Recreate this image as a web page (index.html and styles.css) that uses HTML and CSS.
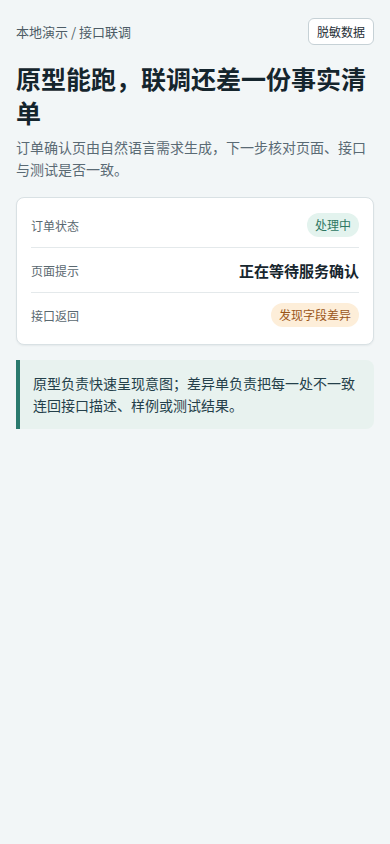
FILE: index.html
```html
<!DOCTYPE html>
<html lang="zh-CN">

<head>
    <meta charset="UTF-8">
    <meta name="viewport" content="width=device-width, initial-scale=1.0">
    <title>接口联调</title>
    <link rel="stylesheet" href="styles.css">
</head>

<body>
    <div class="page">
        <!-- Top bar -->
        <div class="top-bar">
            <div class="crumb">本地演示 / 接口联调</div>
            <button class="mask-button">脱敏数据</button>
        </div>

        <h1 class="title">原型能跑，联调还差一份事实清单</h1>
        <p class="lead">订单确认页由自然语言需求生成，下一步核对页面、接口与测试是否一致。</p>

        <!-- Fact list -->
        <div class="fact-card">
            <div class="fact-row">
                <span class="fact-label">订单状态</span>
                <span class="pill pill-green">处理中</span>
            </div>
            <div class="fact-row">
                <span class="fact-label">页面提示</span>
                <span class="fact-value">正在等待服务确认</span>
            </div>
            <div class="fact-row">
                <span class="fact-label">接口返回</span>
                <span class="pill pill-orange">发现字段差异</span>
            </div>
        </div>

        <div class="note">
            原型负责快速呈现意图；差异单负责把每一处不一致连回接口描述、样例或测试结果。
        </div>
    </div>
</body>

</html>
```

FILE: styles.css
```css
/* Base Styles */
body {
    font-family: "Noto Sans CJK SC", "Noto Sans", sans-serif;
    background-color: #f2f6f7;
    margin: 0;
    padding: 0;
    color: #17262e;
}

.page {
    padding: 18px 16px;
}

.top-bar {
    display: flex;
    justify-content: space-between;
    align-items: center;
}

.crumb {
    font-size: 13px;
    color: #4d5c66;
}

.mask-button {
    font-family: inherit;
    font-size: 12px;
    color: #1f2e36;
    background-color: #fff;
    border: 1px solid #c6d1d6;
    border-radius: 6px;
    padding: 4px 8px;
    line-height: 17px;
    height: 27px;
}

.title {
    font-size: 25px;
    font-weight: 700;
    line-height: 34px;
    margin: 16px 0 7px;
    color: #15252d;
}

.lead {
    font-size: 14px;
    line-height: 22px;
    color: #5a6a74;
    margin: 0 0 17px;
}

.fact-card {
    background-color: #fff;
    border: 1px solid #d9e1e4;
    border-radius: 8px;
    padding: 5px 14px 7px;
    box-shadow: 0 1px 2px rgba(20, 40, 50, 0.06);
}

.fact-row {
    display: flex;
    justify-content: space-between;
    align-items: center;
    height: 44px;
}

.fact-row + .fact-row {
    border-top: 1px solid #e4e9eb;
}

.fact-label {
    font-size: 12px;
    color: #5a6870;
}

.fact-value {
    font-size: 15px;
    font-weight: 700;
    color: #17262e;
}

.pill {
    font-size: 12px;
    line-height: 24px;
    padding: 0 8px;
    border-radius: 12px;
}

.pill-green {
    background-color: #e3f3ee;
    color: #2e7762;
}

.pill-orange {
    background-color: #fdeed9;
    color: #9a5518;
}

.note {
    margin-top: 15px;
    background-color: #e8f2ef;
    border-left: 4px solid #2b7a6e;
    border-radius: 0 8px 8px 0;
    padding: 12px 13px 13px;
    font-size: 14px;
    line-height: 22px;
    color: #24404a;
}
```
